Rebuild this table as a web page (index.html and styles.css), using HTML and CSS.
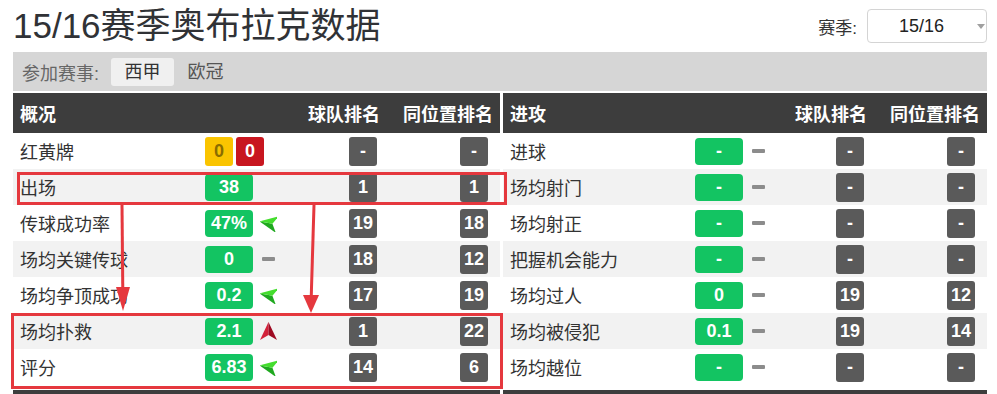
FILE: index.html
```html
<!DOCTYPE html>
<html lang="zh-CN">
<head>
<meta charset="utf-8">
<title>15/16赛季奥布拉克数据</title>
<link rel="stylesheet" href="styles.css">
</head>
<body>
<div class="page">
  <header class="top">
    <h1 class="title">15/16赛季奥布拉克数据</h1>
    <div class="season">
      <span class="season-label">赛季:</span>
      <div class="select"><span>15/16</span><i class="caret"></i></div>
    </div>
  </header>

  <div class="filter">
    <span class="filter-label">参加赛事:</span>
    <span class="tab active">西甲</span>
    <span class="tab">欧冠</span>
  </div>

  <div class="tables">
    <section class="tbl">
      <div class="head"><span class="head-lbl">概况</span><span>球队排名</span><span>同位置排名</span></div>
      <div class="row"><span class="lbl">红黄牌</span><span class="val"><span class="cards"><span class="card yellow">0</span><span class="card red">0</span></span></span><span class="rank r1">-</span><span class="rank r2">-</span></div>
      <div class="row"><span class="lbl">出场</span><span class="val"><span class="badge">38</span></span><span class="rank r1">1</span><span class="rank r2">1</span></div>
      <div class="row"><span class="lbl">传球成功率</span><span class="val"><span class="badge">47%</span><span class="ind"><svg class="arr" viewBox="0 0 17 18"><g transform="rotate(-80 8.5 9)"><polygon points="8.5,0 8.5,13 0,18" fill="#1fa81f"/><polygon points="8.5,0 17,18 8.5,13" fill="#44dd2e"/></g></svg></span></span><span class="rank r1">19</span><span class="rank r2">18</span></div>
      <div class="row"><span class="lbl">场均关键传球</span><span class="val"><span class="badge">0</span><span class="ind"><i class="dash"></i></span></span><span class="rank r1">18</span><span class="rank r2">12</span></div>
      <div class="row"><span class="lbl">场均争顶成功</span><span class="val"><span class="badge">0.2</span><span class="ind"><svg class="arr" viewBox="0 0 17 18"><g transform="rotate(-80 8.5 9)"><polygon points="8.5,0 8.5,13 0,18" fill="#1fa81f"/><polygon points="8.5,0 17,18 8.5,13" fill="#44dd2e"/></g></svg></span></span><span class="rank r1">17</span><span class="rank r2">19</span></div>
      <div class="row"><span class="lbl">场均扑救</span><span class="val"><span class="badge">2.1</span><span class="ind"><svg class="arr" viewBox="0 0 17 18"><polygon points="8.5,0 8.5,13 0,18" fill="#d3213a"/><polygon points="8.5,0 17,18 8.5,13" fill="#9e0a22"/></svg></span></span><span class="rank r1">1</span><span class="rank r2">22</span></div>
      <div class="row"><span class="lbl">评分</span><span class="val"><span class="badge">6.83</span><span class="ind"><svg class="arr" viewBox="0 0 17 18"><g transform="rotate(-80 8.5 9)"><polygon points="8.5,0 8.5,13 0,18" fill="#1fa81f"/><polygon points="8.5,0 17,18 8.5,13" fill="#44dd2e"/></g></svg></span></span><span class="rank r1">14</span><span class="rank r2">6</span></div>
    </section>

    <section class="tbl">
      <div class="head"><span class="head-lbl">进攻</span><span>球队排名</span><span>同位置排名</span></div>
      <div class="row"><span class="lbl">进球</span><span class="val"><span class="badge">-</span><span class="ind"><i class="dash"></i></span></span><span class="rank r1">-</span><span class="rank r2">-</span></div>
      <div class="row"><span class="lbl">场均射门</span><span class="val"><span class="badge">-</span><span class="ind"><i class="dash"></i></span></span><span class="rank r1">-</span><span class="rank r2">-</span></div>
      <div class="row"><span class="lbl">场均射正</span><span class="val"><span class="badge">-</span><span class="ind"><i class="dash"></i></span></span><span class="rank r1">-</span><span class="rank r2">-</span></div>
      <div class="row"><span class="lbl">把握机会能力</span><span class="val"><span class="badge">-</span><span class="ind"><i class="dash"></i></span></span><span class="rank r1">-</span><span class="rank r2">-</span></div>
      <div class="row"><span class="lbl">场均过人</span><span class="val"><span class="badge">0</span><span class="ind"><i class="dash"></i></span></span><span class="rank r1">19</span><span class="rank r2">12</span></div>
      <div class="row"><span class="lbl">场均被侵犯</span><span class="val"><span class="badge">0.1</span><span class="ind"><i class="dash"></i></span></span><span class="rank r1">19</span><span class="rank r2">14</span></div>
      <div class="row"><span class="lbl">场均越位</span><span class="val"><span class="badge">-</span><span class="ind"><i class="dash"></i></span></span><span class="rank r1">-</span><span class="rank r2">-</span></div>
    </section>
  </div>

  <div class="tables next">
    <section class="tbl"><div class="head"></div></section>
    <section class="tbl"><div class="head"></div></section>
  </div>
</div>

<svg class="annot" width="997" height="394" viewBox="0 0 997 394">
  <g fill="none" stroke="#e5383e" stroke-width="3">
    <rect x="18.5" y="173.5" width="487" height="30"/>
    <rect x="12.5" y="314.5" width="489" height="73"/>
    <line x1="122" y1="205" x2="122.8" y2="292"/>
    <line x1="314" y1="205" x2="311.2" y2="298"/>
  </g>
  <g fill="#e5383e">
    <polygon points="116,287 130,287 123,311"/>
    <polygon points="303,295 319,295 311,313"/>
  </g>
</svg>
</body>
</html>
```

FILE: styles.css
```css
html, body {
  margin: 0;
  padding: 0;
  overflow: hidden;
}

body {
  position: relative;
  width: 997px;
  height: 394px;
  background: #fff;
  color: #333;
  font-family: "Liberation Sans", "Noto Sans CJK SC", sans-serif;
}

.page {
  margin-left: 13px;
  width: 974px;
}

/* title row */
.top {
  display: flex;
  justify-content: space-between;
  align-items: center;
  height: 52px;
}

.title {
  margin: 0;
  font-size: 35px;
  font-weight: normal;
  line-height: 52px;
  color: #303236;
  white-space: nowrap;
}

.season {
  display: flex;
  align-items: center;
  gap: 10px;
}

.season-label {
  font-size: 17px;
  color: #333;
}

.select {
  position: relative;
  width: 118px;
  height: 32px;
  border: 1px solid #d4d4d4;
  border-radius: 4px;
  display: flex;
  align-items: center;
  justify-content: center;
  font-size: 18px;
  color: #222;
  box-sizing: content-box;
}

.select span {
  margin-right: 11px;
}

.caret {
  position: absolute;
  right: 1px;
  top: 14px;
  width: 0;
  height: 0;
  border-left: 4px solid transparent;
  border-right: 4px solid transparent;
  border-top: 5px solid #a0a0a0;
}

/* competition filter */
.filter {
  display: flex;
  align-items: center;
  height: 39px;
  margin-bottom: 2px;
  padding-left: 9px;
  background: #d6d6d6;
  font-size: 18px;
}

.filter-label {
  color: #666;
  margin-right: 12px;
}

.tab {
  width: 63px;
  height: 28px;
  line-height: 28px;
  text-align: center;
  border-radius: 3px;
  color: #555;
}

.tab.active {
  background: #f0f0f0;
  color: #333;
}

/* tables */
.tables {
  display: grid;
  grid-template-columns: 487px 484px;
  column-gap: 3px;
}

.tables.next {
  margin-top: 5px;
}

.head {
  display: flex;
  align-items: center;
  gap: 23px;
  height: 40px;
  padding: 0 7px;
  background: #3d3d3d;
  color: #fff;
  font-size: 18px;
  font-weight: bold;
  white-space: nowrap;
}

.head-lbl {
  flex: 1;
}

.row {
  display: grid;
  grid-template-columns: 192px 110px minmax(0, 1fr) 113px 7px;
  align-items: center;
  height: 36px;
  font-size: 18px;
}

.tbl .row:nth-child(odd) {
  background: #f2f2f2;
}

.lbl {
  padding-left: 7px;
  white-space: nowrap;
  color: #333;
}

.val {
  display: flex;
  align-items: center;
  gap: 7px;
}

.badge {
  display: flex;
  align-items: center;
  justify-content: center;
  width: 48px;
  height: 27px;
  border-radius: 4px;
  background: #13c462;
  color: #fff;
  font-weight: bold;
  font-size: 18px;
}

.cards {
  display: flex;
  gap: 3px;
}

.card {
  display: flex;
  align-items: center;
  justify-content: center;
  width: 28px;
  height: 29px;
  border-radius: 3px;
  font-weight: bold;
  font-size: 18px;
}

.card.yellow {
  background: #fac400;
  color: #8a6c00;
}

.card.red {
  background: #c8161f;
  color: #fff;
}

.ind {
  display: flex;
  align-items: center;
  justify-content: center;
  width: 17px;
  height: 18px;
}

.arr {
  width: 17px;
  height: 18px;
  display: block;
}

.dash {
  display: block;
  width: 13px;
  height: 4px;
  border-radius: 1px;
  background: #8c8c8c;
}

.rank {
  justify-self: end;
  display: flex;
  align-items: center;
  justify-content: center;
  width: 28px;
  height: 29px;
  border-radius: 3px;
  background: #5a5a5a;
  color: #fff;
  font-weight: bold;
  font-size: 18px;
}

.r1 {
  margin-right: 3px;
}

.r2 {
  margin-right: 5px;
}

/* annotation overlay */
.annot {
  position: absolute;
  left: 0;
  top: 0;
  pointer-events: none;
}
```
